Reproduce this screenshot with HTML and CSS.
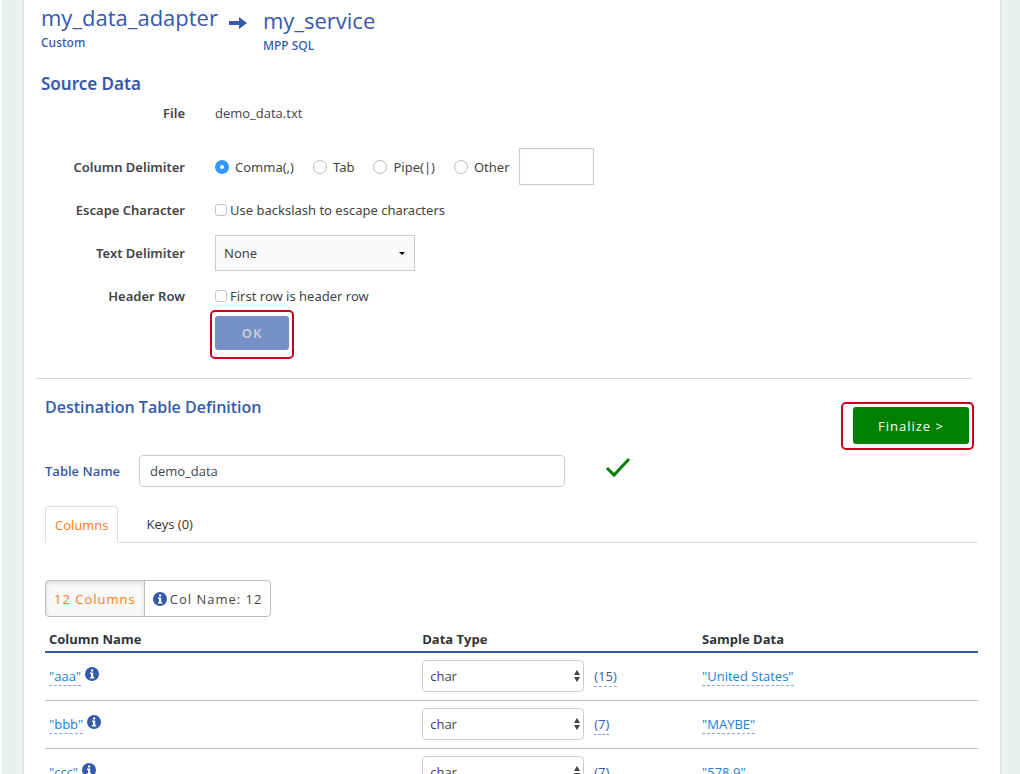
FILE: index.html
```html
<!DOCTYPE html>
<html lang="en">
<head>
<meta charset="utf-8">
<title>my_data_adapter to my_service</title>
<link rel="stylesheet" href="styles.css">
</head>
<body>
<svg class="sprite" aria-hidden="true">
  <symbol id="info" viewBox="0 0 14 14">
    <circle cx="7" cy="7" r="7" fill="#3559ab"/>
    <path d="M6 2.5h2.2v2H6zM5 5.6h3.2v4.3H9.200v1.500H5v-1.500h1V7.100H5z" fill="#fff"/>
  </symbol>
  <symbol id="updown" viewBox="0 0 6 12">
    <path d="M3 0l3 5H0zM3 12l3-5H0z" fill="#444"/>
  </symbol>
</svg>
<main class="panel">
  <header class="route">
    <div class="endpoint">
      <h1 class="endpoint-name">my_data_adapter</h1>
      <p class="endpoint-kind">Custom</p>
    </div>
    <svg class="route-arrow" viewBox="0 0 18 14" role="img" aria-label="to"><path d="M0 5h10V1l8 6-8 6V9H0z" fill="#3559ab"/></svg>
    <div class="endpoint endpoint-target">
      <h1 class="endpoint-name">my_service</h1>
      <p class="endpoint-kind">MPP SQL</p>
    </div>
  </header>

  <form class="source">
    <h2 class="source-title">Source Data</h2>
    <div class="field field-file">
      <span class="field-label">File</span>
      <span class="file-name">demo_data.txt</span>
    </div>
    <div class="field">
      <span class="field-label" id="delim-label">Column Delimiter</span>
      <div class="choices" role="radiogroup" aria-labelledby="delim-label">
        <label class="choice"><input class="radio" type="radio" name="delim" checked>Comma(,)</label>
        <label class="choice"><input class="radio" type="radio" name="delim">Tab</label>
        <label class="choice"><input class="radio" type="radio" name="delim">Pipe(|)</label>
        <label class="choice"><input class="radio" type="radio" name="delim">Other</label>
        <input class="other-input" type="text" aria-label="Other delimiter">
      </div>
    </div>
    <div class="field">
      <span class="field-label">Escape Character</span>
      <label class="tick"><input class="checkbox" type="checkbox">Use backslash to escape characters</label>
    </div>
    <div class="field">
      <label class="field-label" for="text-delim">Text Delimiter</label>
      <div class="select-wrap">
        <select class="text-select" id="text-delim"><option>None</option></select>
        <svg class="caret" viewBox="0 0 6 3" aria-hidden="true"><path d="M0 0h6L3 3z" fill="#000"/></svg>
      </div>
    </div>
    <div class="field">
      <span class="field-label">Header Row</span>
      <label class="tick"><input class="checkbox" type="checkbox">First row is header row</label>
    </div>
    <div class="frame frame-ok"><button class="btn btn-ok" type="button" disabled>OK</button></div>
  </form>

  <hr class="rule">

  <section class="destination">
    <div class="destination-head">
      <h2 class="destination-title">Destination Table Definition</h2>
      <div class="frame frame-finalize"><button class="btn btn-finalize" type="button">Finalize &gt;</button></div>
    </div>
    <div class="name-row">
      <label class="name-label" for="table-name">Table Name</label>
      <input class="name-input" id="table-name" type="text" value="demo_data">
      <svg class="check" viewBox="0 0 26 22" role="img" aria-label="Valid"><path d="M2 11l7 7L24 2" fill="none" stroke="#008000" stroke-width="3"/></svg>
    </div>
    <div class="tabs" role="tablist">
      <button class="tab tab-active" type="button" role="tab" aria-selected="true">Columns</button>
      <button class="tab" type="button" role="tab" aria-selected="false">Keys (0)</button>
    </div>
    <div class="group">
      <button class="group-btn group-btn-active" type="button">12 Columns</button>
      <button class="group-btn" type="button"><svg class="info" aria-hidden="true"><use href="#info"/></svg>Col Name: 12</button>
    </div>
    <table class="columns">
      <thead>
        <tr><th class="col-name">Column Name</th><th class="col-type">Data Type</th><th class="col-sample">Sample Data</th></tr>
      </thead>
      <tbody>
        <tr>
          <td><a class="edit" href="#">"aaa"</a><svg class="info info-raised" aria-hidden="true"><use href="#info"/></svg></td>
          <td><div class="type"><div class="select-wrap"><select class="type-select" aria-label="Type of aaa"><option>char</option></select><svg class="updown" aria-hidden="true"><use href="#updown"/></svg></div><a class="edit edit-dark" href="#">(15)</a></div></td>
          <td><a class="edit" href="#">"United States"</a></td>
        </tr>
        <tr>
          <td><a class="edit" href="#">"bbb"</a><svg class="info info-raised" aria-hidden="true"><use href="#info"/></svg></td>
          <td><div class="type"><div class="select-wrap"><select class="type-select" aria-label="Type of bbb"><option>char</option></select><svg class="updown" aria-hidden="true"><use href="#updown"/></svg></div><a class="edit edit-dark" href="#">(7)</a></div></td>
          <td><a class="edit" href="#">"MAYBE"</a></td>
        </tr>
        <tr>
          <td><a class="edit" href="#">"ccc"</a><svg class="info info-raised" aria-hidden="true"><use href="#info"/></svg></td>
          <td><div class="type"><div class="select-wrap"><select class="type-select" aria-label="Type of ccc"><option>char</option></select><svg class="updown" aria-hidden="true"><use href="#updown"/></svg></div><a class="edit edit-dark" href="#">(7)</a></div></td>
          <td><a class="edit" href="#">"578.9"</a></td>
        </tr>
      </tbody>
    </table>
  </section>
</main>
</body>
</html>
```

FILE: styles.css
```css
* { box-sizing: border-box; }

body {
  margin: 0;
  background: #ebefef;
  border-left: 2px solid #fff;
  color: #444;
  font: 13px/20px "Open Sans", "Noto Sans", sans-serif;
}

h1, h2, p { margin: 0; }
input, select, button { font: inherit; color: inherit; margin: 0; }

.sprite { display: none; }

.panel {
  margin: 0 19px 0 21px;
  padding: 2px 22px 0 12px;
  background: #fff;
  border: solid #e4dfdf;
  border-width: 0 1px;
}

.route { display: flex; align-items: flex-start; padding-left: 5px; color: #3559ab; }
.endpoint-name { font-size: 22px; line-height: 30px; font-weight: 400; }
.endpoint-kind { margin-top: 2px; font: 500 12px/18px "Noto Sans", "Open Sans", sans-serif; }
.endpoint-target { padding-top: 3px; }
.route-arrow { width: 18px; height: 14px; margin: 14px 16px 0 11px; }

.source { display: flex; flex-direction: column; gap: 14px; padding-left: 5px; font-family: "Noto Sans", "Open Sans", sans-serif; }
.source-title { margin: 16px 0 -9px; color: #3559ab; font-size: 17px; line-height: 26px; font-weight: 600; }
.field { display: flex; align-items: center; min-height: 22px; }
.field-file { margin-bottom: 10px; }
.file-name { font-family: "Open Sans", "Noto Sans", sans-serif; }
.field-label { width: 144px; margin-right: 30px; text-align: right; font-weight: 600; }
.choices { display: flex; align-items: center; }
.choice { display: flex; align-items: center; margin-right: 19px; }
.choice:nth-of-type(4) { margin-right: 9px; }

.radio {
  appearance: none;
  width: 14px;
  height: 14px;
  margin-right: 6px;
  border: 1px solid #bbb;
  border-radius: 50%;
  background: #fff;
}
.radio:checked { border: 5px solid #3395fb; }

.other-input { width: 75px; height: 37px; padding: 0 8px; border: 1px solid #ccc; background: #fff; box-shadow: inset 0 1px 2px #eee; }

.tick { display: flex; align-items: center; }
.checkbox {
  appearance: none;
  width: 12px;
  height: 12px;
  margin-right: 3px;
  border: 1px solid #c4c4c4;
  border-radius: 3px;
  background: #fff;
}

.select-wrap { position: relative; }
.text-select {
  appearance: none;
  width: 200px;
  height: 36px;
  padding: 0 8px;
  border: 1px solid #ccc;
  border-radius: 0;
  background: #fafafa;
}
.caret { position: absolute; right: 10px; top: 17px; width: 6px; height: 3px; pointer-events: none; }

.frame { border: 2px solid #c90020; border-radius: 5px; }
.frame-ok { align-self: flex-start; margin: -11px 0 0 169px; padding: 4px 3px 7px; }
.frame-finalize { padding: 3px 3px 4px 10px; }

.btn { display: block; border: 0; border-radius: 3px; letter-spacing: 1px; }
.btn-ok { width: 74px; height: 34px; background: #7590c6; color: #c9cdd6; font-weight: 600; }
.btn-finalize { width: 116px; height: 37px; background: #008000; color: #fff; font-weight: 500; }

.rule { margin: 19px 6px 0 0; border: 0; border-top: 1px solid #d9d9d9; }

.destination { padding-left: 9px; }
.destination-head { display: flex; justify-content: space-between; align-items: flex-start; padding: 23px 4px 0 0; }
.destination-title { margin-top: -7px; color: #3559ab; font-size: 16px; line-height: 24px; font-weight: 600; }

.name-row { display: flex; align-items: center; margin-top: 5px; }
.name-label { width: 94px; color: #3559ab; font-weight: 600; }
.name-input { flex: 0 1 426px; min-width: 0; height: 32px; padding: 0 10px; border: 1px solid #ccc; border-radius: 4px; background: #fff; }
.check { width: 26px; height: 22px; margin: 0 0 6px 40px; }

.tabs { display: flex; gap: 18px; margin-top: 19px; border-bottom: 1px solid #ddd; }
.tab { height: 36px; padding: 0 9px; border: 1px solid transparent; background: none; color: #333; }
.tab-active { margin-bottom: -1px; height: 37px; border-color: #ddd #ddd #fff; border-radius: 4px 4px 0 0; background: #fff; color: #f97a14; }

.group { display: flex; margin-top: 37px; }
.group-btn {
  display: flex;
  align-items: center;
  gap: 3px;
  height: 37px;
  padding: 0 8px;
  border: 1px solid #bbb;
  border-radius: 0 4px 4px 0;
  background: #fff;
  letter-spacing: 1px;
}
.group-btn-active { margin-right: -1px; border-radius: 4px 0 0 4px; background: #f8f8f8; color: #f97a14; box-shadow: inset 0 2px 4px #ddd; }
.info { width: 14px; height: 14px; }
.info-raised { margin-left: 4px; }

.columns { width: 100%; margin-top: 12px; border-collapse: collapse; table-layout: fixed; }
.columns th { padding: 0 4px 2px; border-bottom: 2px solid #3559ab; text-align: left; font-weight: 700; color: #333; }
.columns td { padding: 0 4px; height: 48px; border-bottom: 1px solid #c4c4c4; }
.col-name { width: 40%; }
.col-type, .col-sample { width: 30%; }

.type { display: flex; align-items: center; gap: 10px; }
.type-select { appearance: none; display: block; width: 162px; height: 32px; padding: 0 7px; border: 1px solid #ccc; border-radius: 4px; background: #fff; }
.updown { position: absolute; right: 4px; top: 10px; width: 6px; height: 12px; pointer-events: none; }

.edit { color: #2380cf; text-decoration: none; border-bottom: 1px dashed #8fa6d8; }
.edit-dark { color: #3559ab; }
```
